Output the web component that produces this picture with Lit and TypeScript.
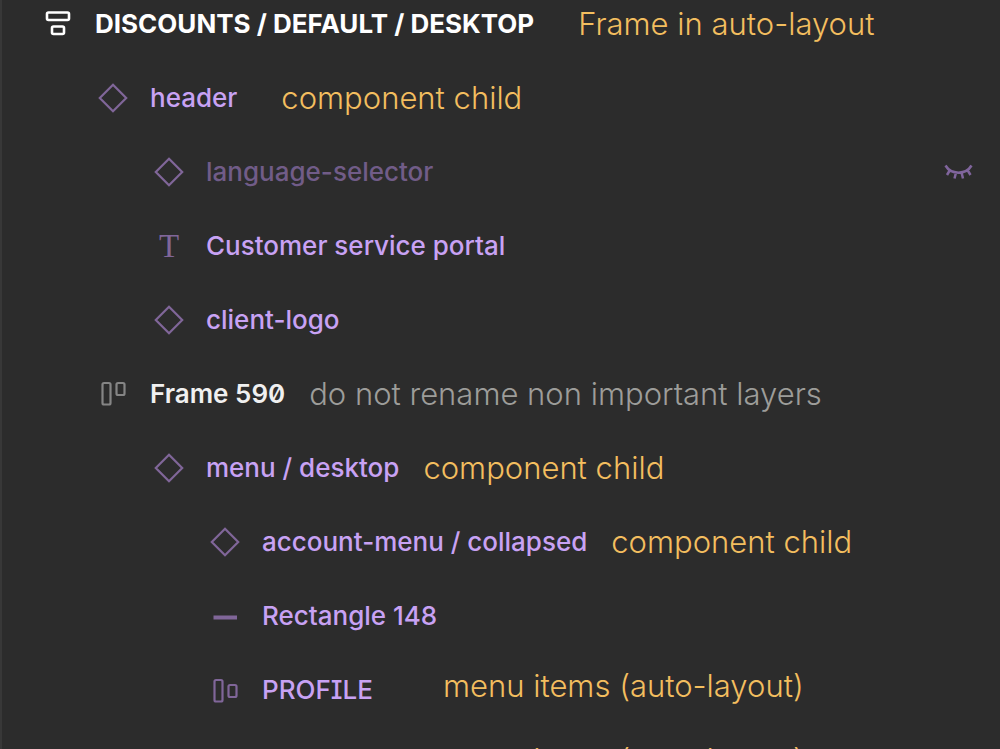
import { LitElement, html, css, svg } from "lit";
import { customElement, property } from "lit/decorators.js";
import { classMap } from "lit/directives/class-map.js";

type IconName = "stack" | "columns-top" | "columns-center" | "component" | "text" | "line";
type NoteGap = "near" | "mid" | "far";

interface Layer {
  label: string;
  icon: IconName;
  depth: 0 | 1 | 2 | 3;
  tone: "root" | "frame" | "component";
  hidden?: boolean;
  feature?: "zero" | "serif-i";
  notes?: string[];
  gap?: NoteGap;
  muted?: boolean;
  raised?: boolean;
}

const layers: Layer[] = [
  { label: "DISCOUNTS / DEFAULT / DESKTOP", icon: "stack", depth: 0, tone: "root", notes: ["Frame in auto-layout"], gap: "mid" },
  { label: "header", icon: "component", depth: 1, tone: "component", notes: ["component child"], gap: "mid" },
  { label: "language-selector", icon: "component", depth: 2, tone: "component", hidden: true },
  { label: "Customer service portal", icon: "text", depth: 2, tone: "component" },
  { label: "client-logo", icon: "component", depth: 2, tone: "component" },
  { label: "Frame 590", icon: "columns-top", depth: 1, tone: "frame", feature: "zero", notes: ["do not rename non important layers"], gap: "near", muted: true },
  { label: "menu / desktop", icon: "component", depth: 2, tone: "component", notes: ["component child"], gap: "near" },
  { label: "account-menu / collapsed", icon: "component", depth: 3, tone: "component", notes: ["component child"], gap: "near" },
  { label: "Rectangle 148", icon: "line", depth: 3, tone: "component" },
  {
    label: "PROFILE", icon: "columns-center", depth: 3, tone: "component", feature: "serif-i",
    notes: ["menu items (auto-layout)", "menu items (auto-layout)"], gap: "far", raised: true,
  },
];

const shapes = {
  stack: svg`<rect x="4" y="3.500" width="22" height="7.500" rx="1.500" stroke-width="2.600"/><rect x="9" y="17.500" width="12" height="7.500" rx="1.500" stroke-width="2.600"/>`,
  "columns-top": svg`<rect x="4.500" y="4" width="8" height="21.500" rx="1.500"/><rect x="18.500" y="4" width="8" height="12" rx="1.500"/>`,
  "columns-center": svg`<rect x="4.500" y="5" width="8" height="21.500" rx="1.500"/><rect x="18.500" y="10" width="8" height="12" rx="1.500"/>`,
  component: svg`<path d="M15 1.800 28.200 15 15 28.200 1.800 15Z"/>`,
  line: svg`<path d="M3.500 16.500h23.500" stroke-width="4"/>`,
};

@customElement("layer-icon")
export class LayerIcon extends LitElement {
  @property() name: IconName = "component";

  static styles = css`
    :host {
      display: flex;
      flex: none;
      align-items: center;
      justify-content: center;
      width: 30px;
      height: 30px;
    }
    .shape {
      width: 30px;
      height: 30px;
      fill: none;
      stroke: currentColor;
      stroke-width: 2.2;
    }
    .letter {
      font: 33px/28px "Liberation Serif", serif;
    }
  `;

  render() {
    return this.name === "text"
      ? html`<span class="letter" aria-hidden="true">T</span>`
      : html`<svg class="shape" viewBox="0 0 30 30" aria-hidden="true">${shapes[this.name]}</svg>`;
  }
}

@customElement("app-root")
export class AppRoot extends LitElement {
  static styles = css`
    :host {
      display: block;
      box-sizing: border-box;
      height: 100vh;
      overflow: hidden;
      background: #2c2c2c;
      border-left: 2px solid #383838;
      font-family: Inter, "Liberation Sans", sans-serif;
    }
    .layers {
      display: flex;
      flex-direction: column;
      gap: 26px;
      margin: 0;
      padding: 0 26px 0 41px;
      list-style: none;
    }
    .layer {
      display: flex;
      align-items: flex-start;
      height: 48px;
      line-height: 48px;
      white-space: nowrap;
    }
    .depth-1 { padding-left: 55px; }
    .depth-2 { padding-left: 111px; }
    .depth-3 { padding-left: 167px; }
    .icon {
      margin: 9px 22px 0 0;
    }
    .label {
      font-size: 26px;
      font-weight: 500;
    }
    .root { color: #ffffff; }
    .root .label { font-weight: 700; }
    .frame .label { font-weight: 600; }
    .frame { color: #f0f0f0; }
    .frame .icon { color: #858585; }
    .component { color: #c8a2f4; }
    .component .icon { color: #806699; }
    .hidden { color: #715c88; }
    .zero { font-feature-settings: "zero"; }
    .serif-i { font-feature-settings: "cv08"; }
    .notes {
      display: flex;
      flex-direction: column;
      gap: 34px;
      color: #f3be5f;
      font-size: 31px;
      font-weight: 300;
    }
    .near { margin-left: 24px; }
    .mid { margin-left: 44px; }
    .far { margin-left: 70px; }
    .muted { color: #9d9d9a; }
    .raised { line-height: 40px; }
    .closed-eye {
      width: 30px;
      height: 30px;
      margin: 9px 0 0 auto;
      fill: none;
      stroke: #80659d;
      stroke-width: 2.5;
    }
  `;

  private renderLayer(layer: Layer) {
    const row = { layer: true, [layer.tone]: true, [`depth-${layer.depth}`]: true, hidden: !!layer.hidden };
    const label = { label: true, zero: layer.feature === "zero", "serif-i": layer.feature === "serif-i" };
    const notes = { notes: true, [layer.gap ?? "near"]: true, muted: !!layer.muted, raised: !!layer.raised };
    return html`
      <li class=${classMap(row)}>
        <layer-icon class="icon" .name=${layer.icon}></layer-icon>
        <span class=${classMap(label)}>${layer.label}</span>
        ${layer.notes
          ? html`<div class=${classMap(notes)}>${layer.notes.map((note) => html`<span>${note}</span>`)}</div>`
          : null}
        ${layer.hidden
          ? html`<svg class="closed-eye" viewBox="0 0 30 30" role="img" aria-label="Hidden layer">
              <path d="M1.500 8.500C7 18 22 18 27.500 8.500M6 13 3 18M12 15.500 10.500 21.500M17.500 15.500 19 21.500M23.500 13l3 5" />
            </svg>`
          : null}
      </li>
    `;
  }

  render() {
    return html`<ul class="layers">${layers.map((layer) => this.renderLayer(layer))}</ul>`;
  }
}
